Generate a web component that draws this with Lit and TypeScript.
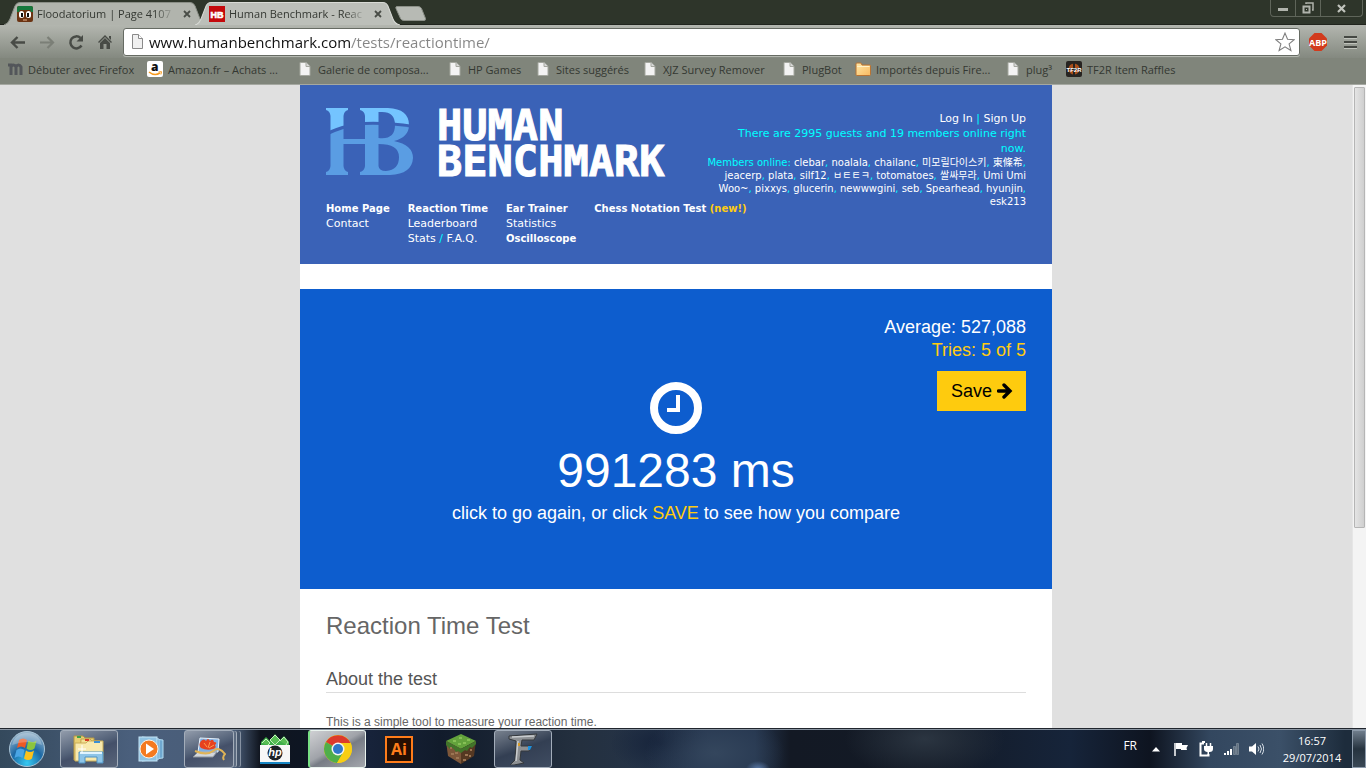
import { LitElement, html, css, svg } from "lit";
import { customElement } from "lit/decorators.js";

const pageIcon = html`<svg width="16" height="16" viewBox="0 0 16 16"><path d="M3 1.500h6l4 4v9H3z" fill="#f3f3f3" stroke="#a4a79f"/><path d="M9 1.500v4h4" fill="#d8d8d8" stroke="#a4a79f"/></svg>`;
const folderIcon = html`<svg width="16" height="16" viewBox="0 0 16 16"><defs><linearGradient id="fo" x2="1" y2="1"><stop stop-color="#ffe9a8"/><stop offset="1" stop-color="#f9b95f"/></linearGradient></defs><path d="M1 13.500V3q0-1 1-1h4l1 2h7.500q1 0 1 1v8.500q0 1-1 1H2q-1 0-1-1z" fill="url(#fo)" stroke="#b87333"/><path d="M2 5.500h12.500" stroke="#fff2c8"/></svg>`;
const mozIcon = html`<svg width="16" height="16" viewBox="0 0 16 16"><path d="M1 4h3v10M4 6q1-2 2.500-2T9 6v8M9 6q1-2 2.500-2T14 6v8" fill="none" stroke="#53565a" stroke-width="3"/></svg>`;
const amazonIcon = html`<svg width="16" height="16" viewBox="0 0 16 16"><rect width="16" height="16" rx="2" fill="#fff"/><text x="4" y="9.500" font-family="Open Sans, sans-serif" font-weight="800" font-size="12" fill="#111">a</text><path d="M2 11q5.500 4.500 11 1" fill="none" stroke="#f79a1c" stroke-width="1.600"/><path d="M11.500 11l3-.3-.6 2.800" fill="none" stroke="#f79a1c"/></svg>`;
const tfIcon = html`<svg width="16" height="16" viewBox="0 0 16 16"><rect width="16" height="16" rx="2" fill="#272421"/><circle cx="8" cy="8" r="5.500" fill="#a94f1c"/><path d="M8 2v12M2 8h12" stroke="#272421" stroke-width="2"/><text x="8" y="10.500" text-anchor="middle" font-family="Liberation Sans, sans-serif" font-weight="700" font-size="6" fill="#fff">TF2R</text></svg>`;

const bookmarks = [
  { icon: mozIcon, text: "Débuter avec Firefox", width: 140 },
  { icon: amazonIcon, text: "Amazon.fr – Achats ...", width: 150 },
  { icon: pageIcon, text: "Galerie de composa...", width: 150 },
  { icon: pageIcon, text: "HP Games", width: 88 },
  { icon: pageIcon, text: "Sites suggérés", width: 107 },
  { icon: pageIcon, text: "XJZ Survey Remover", width: 139 },
  { icon: pageIcon, text: "PlugBot", width: 74 },
  { icon: folderIcon, text: "Importés depuis Fire...", width: 150 },
  { icon: pageIcon, text: "plug³", width: 61 },
  { icon: tfIcon, text: "TF2R Item Raffles", width: 120 },
];

const explorerIcon = html`<svg width="34" height="32" viewBox="0 0 34 32"><path d="M2 3h9l2 2h9v22H2z" fill="#e8cf74" stroke="#b59743"/><path d="M9 6h9l2 2h8v19H8z" fill="#f3df93" stroke="#bfa24d"/><path d="M3 10h11l2-2h15v20H3z" fill="#f8e9ae" stroke="#c9ad59"/><path d="M5 4h4" stroke="#3fa04a" stroke-width="2"/><path d="M13 7h4" stroke="#d93a24" stroke-width="2"/><path d="M22 9h6" stroke="#3b8fd3" stroke-width="2"/><path d="M7 19h24v11h-6v-6H13v6H7z" fill="#8ec5e8" stroke="#4e93c4"/><path d="M8 20h22" stroke="#e0f4ff" stroke-width="2"/><path d="M10 12v8M6 16h8" stroke="#fff"/></svg>`;
const playerIcon = html`<svg width="28" height="28" viewBox="0 0 28 28"><path d="M8 3l18 2v18l-18 2z" fill="#6fa8d0" stroke="#b3dcf2"/><path d="M5 2l17 2v20l-17 2z" fill="#5e9cc8" stroke="#b3dcf2"/><rect x="2" y="2" width="18" height="24" fill="#8fc2e2" stroke="#c5e6f7"/><circle cx="12" cy="14" r="9" fill="#f47a20" stroke="#fff3e4"/><path d="M9 8.500l8 5.500-8 5.500z" fill="#fff"/></svg>`;
const laptopIcon = html`<svg width="34" height="28" viewBox="0 0 34 28"><path d="M8 3l19 1-1 13H6z" fill="#7fb0e2" stroke="#e7f2fb"/><path d="M9 6q3-3 5 0 2-4 4 0 3-3 4 1 4 0 1 3 2 3-2 4-6 2-12-1-3-3 0-7z" fill="#e6421f"/><path d="M12 8l3 4M18 7l-2 6M22 10l-5 3" stroke="#ff9a4a"/><path d="M6 17h19l-4 5H1z" fill="#d2d7dc" stroke="#8b929a"/><path d="M3 16q12 5 18 0t12 3q-3 3-1 6" fill="none" stroke="#e0b456" stroke-width="2"/></svg>`;
const hpIcon = html`<svg width="32" height="32" viewBox="0 0 32 32"><path d="M2 13V9l5-5 4 4 5-7 5 6 4-4 5 6v4z" fill="#3fae49"/><path d="M3 10l4-4 4 4-2 2M11 7l5-5 5 5-5 5zM21 8l4-4 4 5-2 3" fill="#58bd55" stroke="#c5f1bd"/><path d="M1 12h30v17H1z" fill="#f7f7f7"/><path d="M1 29h30v2H1z" fill="#1786c4"/><circle cx="16" cy="20" r="7.500" fill="#1c2228"/><text x="16" y="23" text-anchor="middle" font-family="Liberation Sans, sans-serif" font-style="italic" font-weight="700" font-size="11" fill="#fff">hp</text></svg>`;
const chromeIcon = html`<svg width="30" height="30" viewBox="0 0 30 30"><circle cx="15" cy="15" r="14" fill="#f8ce14"/><path d="M15 15L2.900 8A14 14 0 0 1 27.500 9H15z" fill="#dc3a2c"/><path d="M2.900 8A14 14 0 0 0 14 29l6-10-5-4z" fill="#4fae4a"/><path d="M15 9h12.500A14 14 0 0 1 14 29l6.500-11z" fill="#f8ce14"/><circle cx="15" cy="15" r="6.500" fill="#f4f4f4"/><circle cx="15" cy="15" r="5" fill="#2f78c9"/></svg>`;
const aiIcon = html`<svg width="28" height="27" viewBox="0 0 28 27"><rect x="1" y="1" width="26" height="25" fill="#260f03" stroke="#ff7c1a" stroke-width="2"/><text x="14" y="19" text-anchor="middle" font-family="Open Sans, sans-serif" font-weight="700" font-size="16" fill="#ff7c1a">Ai</text></svg>`;
const blockIcon = html`<svg width="32" height="32" viewBox="0 0 32 32"><path d="M1 8L16 1l15 7-15 8z" fill="#63a33c"/><path d="M1 8l15 8v15L3 23z" fill="#7c5639"/><path d="M31 8l-15 8v15l13-8z" fill="#553822"/><path d="M1 8l15 8v4l-3-2-2 1-3-4-3 1-4-4zM31 8l-15 8v4l4-3 2 1 3-4 2 1 4-4z" fill="#41752a"/><path d="M5 15h2M10 20h3M6 21h3M11 25h3M20 22h3M25 17h2M24 23h2M18 27h3" stroke="#9b7553" stroke-width="2"/><path d="M8 8h3M14 5h3M18 10h3M22 7h3M13 11h3" stroke="#86c056" stroke-width="2"/></svg>`;
const fIcon = html`<svg width="32" height="32" viewBox="0 0 32 32"><path d="M2 3l28-2-3 6H15l-1 6h11l-3 5h-8l-1 9 4 3-10 2H3l5-5L9 8 2 6z" fill="#8d9093" stroke="#34383c"/><path d="M5 4l22-1M11 8l-2 20" stroke="#c9cccf" stroke-width="1.500"/><path d="M21 13h4l-2 4h-2z" fill="#1b90df"/><path d="M11 10h2v3h-2z" fill="#d89c27"/></svg>`;

const tasks = [
  { name: "Explorer", icon: explorerIcon, cls: "task open" },
  { name: "Media Player", icon: playerIcon, cls: "task" },
  { name: "Photos", icon: laptopIcon, cls: "task open stack" },
  { name: "HP", icon: hpIcon, cls: "task" },
  { name: "Chrome", icon: chromeIcon, cls: "task open active" },
  { name: "Illustrator", icon: aiIcon, cls: "task" },
  { name: "Minecraft", icon: blockIcon, cls: "task" },
  { name: "Fraps", icon: fIcon, cls: "task open dim" },
];

const members = [
  ["clebar", "noalala", "chailanc", "미모릴다이스키", "東條希"],
  ["jeacerp", "plata", "silf12", "ㅂㅌㅌㅋ", "totomatoes", "쌀싸무라", "Umi Umi"],
  ["Woo~", "pixxys", "glucerin", "newwwgini", "seb", "Spearhead", "hyunjin"],
  ["esk213"],
];

const markShape = svg`<path fill-rule="evenodd" d="M0 0H22V2Q18 3 17.500 8V31H39V8Q38.500 3 34 2V0H62Q83 1 83 17Q83 29 68 33Q87 37 87 50Q86 66 64 67H34V64Q38.500 63 39 58V36H17.500V58Q18 63 22 64V67H0V64Q4 63 4.500 58V8Q4 3 0 2zM52.500 4V30Q69 32 69 17Q69 4 56 4zM52.500 36V58Q53 63 60 63Q73 62 73 49Q73 36 52.500 36z"/>`;

@customElement("app-root")
export class AppRoot extends LitElement {
  static styles = css`
    :host { display: flex; flex-direction: column; height: 100vh; overflow: hidden; background: #e0e0e0; font-family: "Liberation Sans", Arial, sans-serif; }
    * { box-sizing: border-box; }
    svg { display: block; flex: none; }
    a { color: inherit; text-decoration: none; }
    button { padding: 0; border: 0; background: none; font: inherit; color: inherit; }
    h1, h2, p { margin: 0; font-weight: 400; }

    .chrome { flex: none; font-family: "Open Sans", "Noto Sans", sans-serif; color: #343832; font-size: 11px; }
    .strip { display: flex; height: 25px; background: #2e352a; padding-left: 4px; border-bottom: 1px solid #20241d; }
    .tab { position: relative; display: flex; align-items: center; width: 203px; height: 25px; padding: 2px 16px 0 13px; margin-right: -12px; }
    .tab.current { z-index: 1; padding: 2px 18px 0 14px; width: 205px; }
    .tab .shape { position: absolute; inset: 0; width: 100%; height: 100%; }
    .tab .icon, .tab .label, .tab .close { position: relative; }
    .tab .label { flex: 1; margin-left: 4px; overflow: hidden; white-space: nowrap; font-size: 11px; line-height: 16px; mask-image: linear-gradient(90deg, #000 85%, transparent); }
    .tab .close { margin-left: 8px; }
    .newtab { margin: 6px 0 0 7px; align-self: flex-start; }
    .winctl { display: flex; margin-left: auto; margin-right: 3px; height: 17px; border: 1px solid #5f655a; border-top: 0; border-radius: 0 0 4px 4px; }
    .winctl button { display: grid; place-items: center; width: 25px; border-right: 1px solid #5f655a; }
    .winctl button:last-child { width: 41px; border-right: 0; }
    .toolbar { display: flex; align-items: center; height: 33px; padding: 3px 9px 2px 8px; background: linear-gradient(#b3b6af, #848980); }
    .tool { width: 20px; height: 20px; margin-right: 9px; display: grid; place-items: center; }
    .omni { flex: 1; display: flex; align-items: center; min-width: 0; height: 28px; margin-left: -1px; padding: 0 4px 0 6px; background: #fff; border: 1px solid #666b63; border-radius: 3px; box-shadow: 0 1px 0 #b4b8b0; }
    .url { flex: 1; min-width: 0; height: 24px; margin-left: 4px; padding: 0; border: 0; outline: 0; font: 15px/24px "Open Sans", "Noto Sans", sans-serif; color: transparent; background: linear-gradient(90deg, #111 201px, #858585 201px); -webkit-background-clip: text; background-clip: text; }
    .abp { margin-left: 8px; }
    .menu { margin-left: 16px; }
    .marks { display: flex; height: 27px; padding: 0 7px; background: #80857b; border-bottom: 1px solid #a5a8a1; }
    .mark { flex: none; display: flex; align-items: center; gap: 5px; padding-bottom: 4px; white-space: nowrap; }

    .view { flex: 1; display: flex; min-height: 0; }
    .scroll { flex: 1; overflow: hidden; }
    .column { width: 752px; max-width: 100%; min-height: 100%; margin: 0 auto; background: #fff; }
    .bar { width: 14px; padding: 2px 1px; background: #f4f4f4; border-left: 1px solid #e6e6e6; }
    .thumb { height: 69%; border: 1px solid #b5b5b5; border-radius: 1px; background: linear-gradient(90deg, #e4e4e4, #cfcfcf); }

    .head { display: grid; grid-template-columns: 1fr 320px; grid-template-rows: 67px auto; row-gap: 26px; padding: 23px 26px 18px; background: #3a62b7; color: #0ff; font: 11px/15px "DejaVu Sans", Verdana, "Noto Sans CJK KR", sans-serif; }
    .head a { color: #fff; }
    .brand { display: flex; gap: 23px; grid-area: 1 / 1 / 2 / 2; }
    .word { font: 700 42px/36px "DejaVu Sans Mono", monospace; color: #fff; -webkit-text-stroke: 1px #fff; white-space: nowrap; }
    .nav { grid-area: 2 / 1 / 3 / 3; display: flex; gap: 18px; white-space: nowrap; }
    .nav .item { display: block; height: 15px; }
    .nav b { color: #fff; font-size: 10px; }
    .nav .new { color: #fc1; }
    .user { grid-area: 1 / 2 / 3 / 3; padding-top: 3px; text-align: right; white-space: nowrap; }
    .online { line-height: 13px; font-size: 10px; }

    .stage { display: grid; grid-template-columns: 1fr; height: 300px; margin-top: 25px; background: #0d5dce; color: #fff; font-size: 18px; line-height: 23px; }
    .score { grid-area: 1 / 1; justify-self: end; padding: 27px 26px 0 0; text-align: right; align-self: start; }
    .gold { color: #fc1; }
    .stage .save { display: flex; align-items: center; gap: 5px; height: 40px; margin: 9px 0 0 auto; padding: 0 13px 0 14px; background: #fecb0e; color: #000; font-size: 18px; }
    .result { grid-area: 1 / 1; display: flex; flex-direction: column; align-items: center; padding-top: 93px; }
    .time { margin-top: 9px; font-size: 48px; line-height: 56px; }
    .hint { margin-top: 1px; line-height: 26px; }

    .body { padding: 22px 26px; color: #666; }
    .body h1 { font-size: 24px; line-height: 30px; }
    .body h2 { margin-top: 27px; padding-bottom: 2px; font-size: 18px; line-height: 22px; color: #555; border-bottom: 1px solid #ddd; }
    .body p { margin-top: 20px; font-size: 12px; line-height: 18px; }

    .taskbar { flex: none; display: flex; height: 40px; padding-left: 8px; border-top: 1px solid #20252d; box-shadow: inset 0 1px 0 #8994a1; color: #fff; font: 11px/17px "Open Sans", sans-serif;
      background: radial-gradient(12px 8px at 758px 40px, #5b7aa8, transparent), radial-gradient(70px 40px at 715px 24px, #34465d, transparent), radial-gradient(80px 40px at 925px 10px, #2b3541, transparent), radial-gradient(50px 30px at 660px 14px, #16233a, transparent), linear-gradient(90deg, #34495c 0, #4a5f7c 130px, #4a5d78 235px, #10151f 260px, #0e1522 300px, #17233a 370px, #111b2b 440px, #24303f 580px, #25364f 700px, #25364f 755px, #131924 790px, #131a26 930px, #16243a 1070px, #0e1420 1150px, #33475f 1210px, #3b5068 1280px, #1d2c3c 1345px); }
    .orb { width: 38px; display: grid; place-items: center; margin-right: 14px; }
    .tasks { display: flex; gap: 4px; }
    .task { width: 58px; height: 38px; margin-top: 1px; display: grid; place-items: center; border-radius: 3px; }
    .task.open { border: 1px solid #a3adba; background: linear-gradient(160deg, #929cab, #536178 45%, #445069 55%, #59657a); }
    .task.stack { width: 50px; margin-right: 8px; box-shadow: 3px 0 0 -1px #5c6b80, 4px 0 0 -1px #a3adba, 7px 0 0 -1px #46566c, 8px 0 0 -1px #8792a2; }
    .task.active { border-color: #e9f3ee; border-left: 2px solid #79e084; background: linear-gradient(150deg, #cfd0d3, #a0a3a9 45%, #777c85 55%, #a4a7ad); }
    .task.dim { background: linear-gradient(160deg, #78818e, #333f53 50%, #3f4c61); }
    .tray { display: flex; align-items: center; gap: 9px; margin-left: auto; }
    .lang { padding-bottom: 6px; margin-right: 2px; font-size: 12px; }
    .clock { width: 68px; margin-left: 5px; text-align: center; }
    .desk { width: 14px; height: 38px; margin-top: 1px; margin-left: -3px; align-self: flex-start; border: 1px solid #8d9bab; background: linear-gradient(#6f7d8c, #26333f 50%, #3a4855); }
  `;

  tab(current: boolean, icon: unknown, label: string) {
    return html`<div class=${current ? "tab current" : "tab"} role="tab">
      <svg class="shape" viewBox="0 0 204 25" preserveAspectRatio="none"><path d="M0 25Q4 24 6 19L11 6Q12.500 2.500 16 2.500H187Q190.500 2.500 192 6L197 19Q199 24 204 25" fill=${current ? "#bcbfb9" : "#b1b4ad"} stroke=${current ? "#d9dbd6" : "#8c9088"}/></svg>
      <span class="icon">${icon}</span><span class="label">${label}</span>
      <button class="close" aria-label="Fermer"><svg width="8" height="8" viewBox="0 0 8 8"><path d="M1 1l6 6M7 1L1 7" stroke="#494d47" stroke-width="1.800"/></svg></button>
    </div>`;
  }

  render() {
    return html`
      <div class="chrome">
        <div class="strip">
          ${this.tab(false, html`<svg width="16" height="16" viewBox="0 0 16 16"><rect width="16" height="16" rx="2" fill="#6b3312"/><path d="M0 6V2q0-2 2-2h12q2 0 2 2v4h-2L13 4H3L2 6z" fill="#15783c"/><rect x="2" y="5" width="5" height="7" rx="2.500" fill="#fff"/><rect x="9" y="5" width="5" height="7" rx="2.500" fill="#fff"/><path d="M4 7h2v4H4zM10 7h2v4h-2z" fill="#111"/><path d="M6 14h4" stroke="#e9b48c"/></svg>`, "Floodatorium | Page 4107")}
          ${this.tab(true, html`<svg width="16" height="16" viewBox="0 0 16 16"><rect width="16" height="16" fill="#c4090c"/><text x="8" y="11.500" text-anchor="middle" font-family="Liberation Sans, sans-serif" font-weight="700" font-size="9" fill="#fff" stroke="#fff" stroke-width=".6">HB</text></svg>`, "Human Benchmark - Reac")}
          <button class="newtab" aria-label="Nouvel onglet"><svg width="32" height="15" viewBox="0 0 32 15"><path d="M1.500.5H23q2.500 0 3.500 2l4 10q.5 2-1.500 2H9q-2.500 0-3.500-2L1 2.500Q.5.5 1.500.5z" fill="#b7bab4" stroke="#8c9088"/></svg></button>
          <div class="winctl">
            <button aria-label="Réduire"><svg width="12" height="12" viewBox="0 0 12 12"><rect x="1" y="6" width="10" height="3" fill="#b0b3ac"/></svg></button>
            <button aria-label="Restaurer"><svg width="12" height="12" viewBox="0 0 12 12"><path d="M4 2V1h7v7h-1" fill="none" stroke="#b0b3ac" stroke-width="1.500"/><path d="M1.500 4.500h6v6h-6z" fill="none" stroke="#b0b3ac" stroke-width="2"/><rect x="4" y="7" width="1" height="1" fill="#b0b3ac"/></svg></button>
            <button aria-label="Fermer la fenêtre"><svg width="9" height="9" viewBox="0 0 9 9"><path d="M1 1l7 7M8 1L1 8" stroke="#c0c3bc" stroke-width="2.200"/></svg></button>
          </div>
        </div>
        <div class="toolbar">
          <button class="tool" aria-label="Précédent"><svg width="17" height="15" viewBox="0 0 17 15"><path d="M15 7.500H2.500M7.500 2L2 7.500 7.500 13" fill="none" stroke="#484b46" stroke-width="2.400"/></svg></button>
          <button class="tool" aria-label="Suivant"><svg width="17" height="15" viewBox="0 0 17 15"><path d="M1 7.500h12.500M8.500 2L14 7.500 8.500 13" fill="none" stroke="#7b7f77" stroke-width="2.200"/></svg></button>
          <button class="tool" aria-label="Actualiser"><svg width="17" height="17" viewBox="0 0 17 17"><path d="M13.500 11.500A6 6 0 1 1 12.500 4" fill="none" stroke="#484b46" stroke-width="2.500"/><path d="M15 1v6.500H8.500z" fill="#484b46"/></svg></button>
          <button class="tool" aria-label="Accueil"><svg width="16" height="16" viewBox="0 0 16 16"><path d="M8 1l7 7-1 1-6-6-6 6-1-1zM12 2h2v4l-2-2zM3 9l5-5 5 5v6H9.500v-5h-3v5H3z" fill="#484b46"/></svg></button>
          <label class="omni"><svg width="15" height="16" viewBox="0 0 15 16"><path d="M2.500.5h6l4 4v10h-10z" fill="#f0f0f0" stroke="#8a8a8a"/><path d="M8.500.5v4h4" fill="#fff" stroke="#8a8a8a"/></svg>
            <input class="url" aria-label="Adresse" value="www.humanbenchmark.com/tests/reactiontime/">
            <svg width="20" height="20" viewBox="0 0 18 18"><path d="M9 1l2.300 5.500 6 .4-4.600 3.800 1.600 5.900L9 13.400l-5.300 3.200 1.600-5.900L.7 6.900l6-.4z" fill="#fff" stroke="#7e7e7e"/></svg>
          </label>
          <button class="abp" aria-label="Adblock Plus"><svg width="20" height="20" viewBox="0 0 20 20"><path d="M6.500 1h7L19 6.500v7L13.500 19h-7L1 13.500v-7z" fill="#d23a1c"/><text x="10" y="13.500" text-anchor="middle" font-family="Open Sans, sans-serif" font-weight="700" font-size="9" fill="#fff">ABP</text></svg></button>
          <button class="menu" aria-label="Menu"><svg width="13" height="14" viewBox="0 0 13 14"><path d="M0 2h13M0 7h13M0 12h13" stroke="#454843" stroke-width="2"/><path d="M0 3.500h13M0 8.500h13M0 13.500h13" stroke="#c0c3bc"/></svg></button>
        </div>
        <nav class="marks">${bookmarks.map((b) => html`<a class="mark" href="#" style="width:${b.width}px">${b.icon}<span>${b.text}</span></a>`)}</nav>
      </div>

      <div class="view">
        <div class="scroll"><main class="column">
          <header class="head">
            <a class="brand" href="#" aria-label="Human Benchmark">
              <svg width="88" height="67" viewBox="0 0 88 67">
                <defs>
                  <clipPath id="top"><path d="M0 0H88V17Q60 13 38 14Q18 16 0 24z"/></clipPath>
                  <clipPath id="low"><path d="M0 28Q18 19 38 17Q60 16 88 20V67H0z"/></clipPath>
                </defs>
                <g clip-path="url(#top)" fill="#74c4ff">${markShape}</g>
                <g clip-path="url(#low)" fill="#5a9de3">${markShape}</g>
              </svg>
              <span class="word">HUMAN<br>BENCHMARK</span>
            </a>
            <nav class="nav">
              <div><a class="item" href="#"><b>Home Page</b></a><a class="item" href="#">Contact</a></div>
              <div><a class="item" href="#"><b>Reaction Time</b></a><a class="item" href="#">Leaderboard</a><span class="item"><a href="#">Stats</a> / <a href="#">F.A.Q.</a></span></div>
              <div><a class="item" href="#"><b>Ear Trainer</b></a><a class="item" href="#">Statistics</a><a class="item" href="#"><b>Oscilloscope</b></a></div>
              <div><a class="item" href="#"><b>Chess Notation Test <span class="new">(new!)</span></b></a></div>
            </nav>
            <div class="user">
              <a href="#">Log In</a> | <a href="#">Sign Up</a><br>There are 2995 guests and 19 members online right<br>now.
              <div class="online">Members online: ${members.map((row, r) => html`${row.map((m, i) => html`<a href="#">${m}</a>${r === 3 || (r === 1 && i === 6) ? "" : i === row.length - 1 ? "," : ", "}`)}${r < 3 ? html`<br>` : ""}`)}</div>
            </div>
          </header>
          <section class="stage">
            <div class="result">
              <svg width="52" height="52" viewBox="0 0 52 52"><circle cx="26" cy="26" r="22" fill="none" stroke="#fff" stroke-width="8"/><path d="M28 13v15H17" fill="none" stroke="#fff" stroke-width="4"/></svg>
              <div class="time">991283 ms</div>
              <div class="hint">click to go again, or click <span class="gold">SAVE</span> to see how you compare</div>
            </div>
            <div class="score">Average: 527,088<br><span class="gold">Tries: 5 of 5</span>
              <button class="save">Save<svg width="16" height="16" viewBox="0 0 16 16"><path d="M1.500 8h11M7 2l6 6-6 6" fill="none" stroke="#000" stroke-width="3.400" stroke-linecap="round"/></svg></button>
            </div>
          </section>
          <section class="body">
            <h1>Reaction Time Test</h1>
            <h2>About the test</h2>
            <p>This is a simple tool to measure your reaction time.</p>
          </section>
        </main></div>
        <div class="bar"><div class="thumb"></div></div>
      </div>

      <div class="taskbar">
        <button class="orb" aria-label="Démarrer"><svg width="38" height="38" viewBox="0 0 38 38"><defs><radialGradient id="ob" cx=".5" cy=".9" r=".9"><stop stop-color="#35c9f2"/><stop offset=".5" stop-color="#1c68a4"/><stop offset="1" stop-color="#9db8cc"/></radialGradient></defs><circle cx="19" cy="19" r="17.500" fill="url(#ob)" stroke="#a9c4d6"/><path d="M11 10q4-3 8 0l-2 8q-4-3-8 0z" fill="#ee5a24"/><path d="M20.500 10.500q4 3 8 0l-2 8q-4 3-8 0z" fill="#8bc53f"/><path d="M8.500 20q4-3 8 0l-2 8q-4-3-8 0z" fill="#4aa5e4"/><path d="M18 20.500q4 3 8 0l-2 8q-4 3-8 0z" fill="#fcc21b"/><path d="M4 15Q7 3 19 3t15 12Q20 9 4 15z" fill="#fff" opacity=".25"/></svg></button>
        <div class="tasks">${tasks.map((t) => html`<button class=${t.cls} aria-label=${t.name}>${t.icon}</button>`)}</div>
        <div class="tray">
          <span class="lang">FR</span>
          <svg width="16" height="16" viewBox="0 0 16 16"><path d="M4 10.500L8 6l4 4.500z" fill="#fff"/></svg>
          <svg width="16" height="16" viewBox="0 0 16 16"><path d="M2 2v13" stroke="#fff" stroke-width="1.500"/><path d="M3 2h6v2h6l-1.500 3 .5 2H8V8H3z" fill="#fff"/></svg>
          <svg width="16" height="16" viewBox="0 0 16 16"><path d="M6 2.500H2.500v12h8V13" fill="none" stroke="#fff" stroke-width="2"/><path d="M4 0h3v2H4zM6 5h9v3q0 3-3.500 3H11v4H9.500v-4Q6 10.500 6 8z" fill="#fff"/><path d="M8.500 2v3M12.500 2v3" stroke="#fff" stroke-width="1.500"/></svg>
          <svg width="16" height="16" viewBox="0 0 16 16"><path d="M1 12h2v2H1zM4 10h2v4H4zM7 8h2v6H7z" fill="#fff"/><path d="M10.500 5.500h2v8h-2zM13.500 2.500h2v11h-2z" fill="#61707f" stroke="#8c99a6" stroke-width=".6"/></svg>
          <svg width="16" height="16" viewBox="0 0 16 16"><path d="M1 5.500h3L8 2v12l-4-3.500H1z" fill="#fff"/><path d="M10 5.500q2 2.500 0 5M12 4q3 4 0 8M14 2.500q3.500 5.500 0 11" fill="none" stroke="#d5dde5"/></svg>
          <div class="clock">16:57<br>29/07/2014</div>
          <button class="desk" aria-label="Bureau"></button>
        </div>
      </div>
    `;
  }
}
